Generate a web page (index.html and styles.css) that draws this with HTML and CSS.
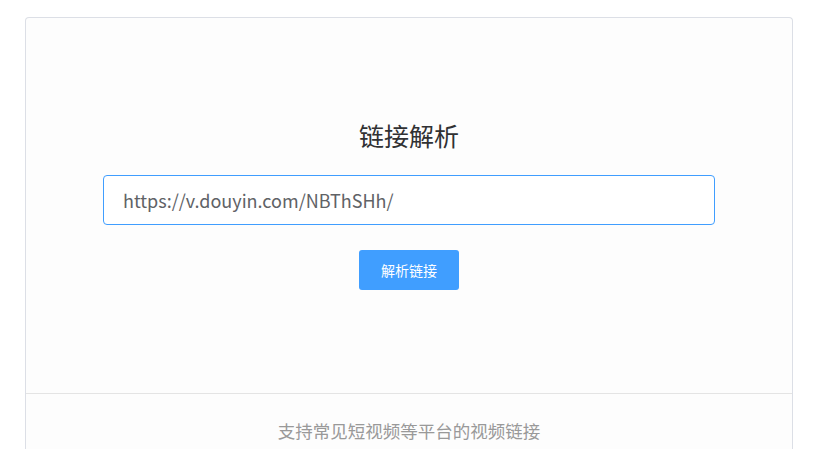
FILE: index.html
```html
<!DOCTYPE html>
<html lang="zh">
<head>
<meta charset="utf-8">
<title>链接解析</title>
<link rel="stylesheet" href="styles.css">
</head>
<body>
<div class="page">
  <div class="card">
    <div class="main">
      <h1 class="title">链接解析</h1>
      <input class="url-input" type="text" value="https://v.douyin.com/NBThSHh/">
      <button class="parse-btn" type="button">解析链接</button>
    </div>
    <div class="footer">支持常见短视频等平台的视频链接</div>
  </div>
</div>
</body>
</html>
```
FILE: styles.css
```css
html, body {
  margin: 0;
  padding: 0;
  background: #ffffff;
  font-family: "Noto Sans CJK SC", "Noto Sans", sans-serif;
}
.page {
  padding: 17px 29px 0 25px;
}
.card {
  width: 768px;
  box-sizing: border-box;
  border: 1px solid #dcdfe6;
  border-bottom: none;
  border-radius: 4px 4px 0 0;
  background: #fdfdfd;
  height: 440px;
}
.main {
  display: flex;
  flex-direction: column;
  align-items: center;
  padding: 100px 0 103px;
  border-bottom: 1px solid #e4e4e4;
}
.title {
  margin: 0 0 23px;
  font-size: 25px;
  line-height: 34px;
  font-weight: 400;
  color: #303133;
}
.url-input {
  width: 612px;
  height: 50px;
  box-sizing: border-box;
  border: 1px solid #409eff;
  border-radius: 4px;
  padding: 0 19px;
  font-family: "Noto Sans CJK SC", "Noto Sans", sans-serif;
  font-size: 18px;
  color: #606266;
  background: #ffffff;
  outline: none;
}
.parse-btn {
  margin-top: 25px;
  width: 100px;
  height: 40px;
  border: none;
  border-radius: 3px;
  background: #409eff;
  color: #ffffff;
  font-family: "Noto Sans CJK SC", sans-serif;
  font-size: 14px;
  padding: 0;
}
.footer {
  padding-top: 25px;
  text-align: center;
  font-size: 17.5px;
  line-height: 24px;
  color: #999999;
}
```
